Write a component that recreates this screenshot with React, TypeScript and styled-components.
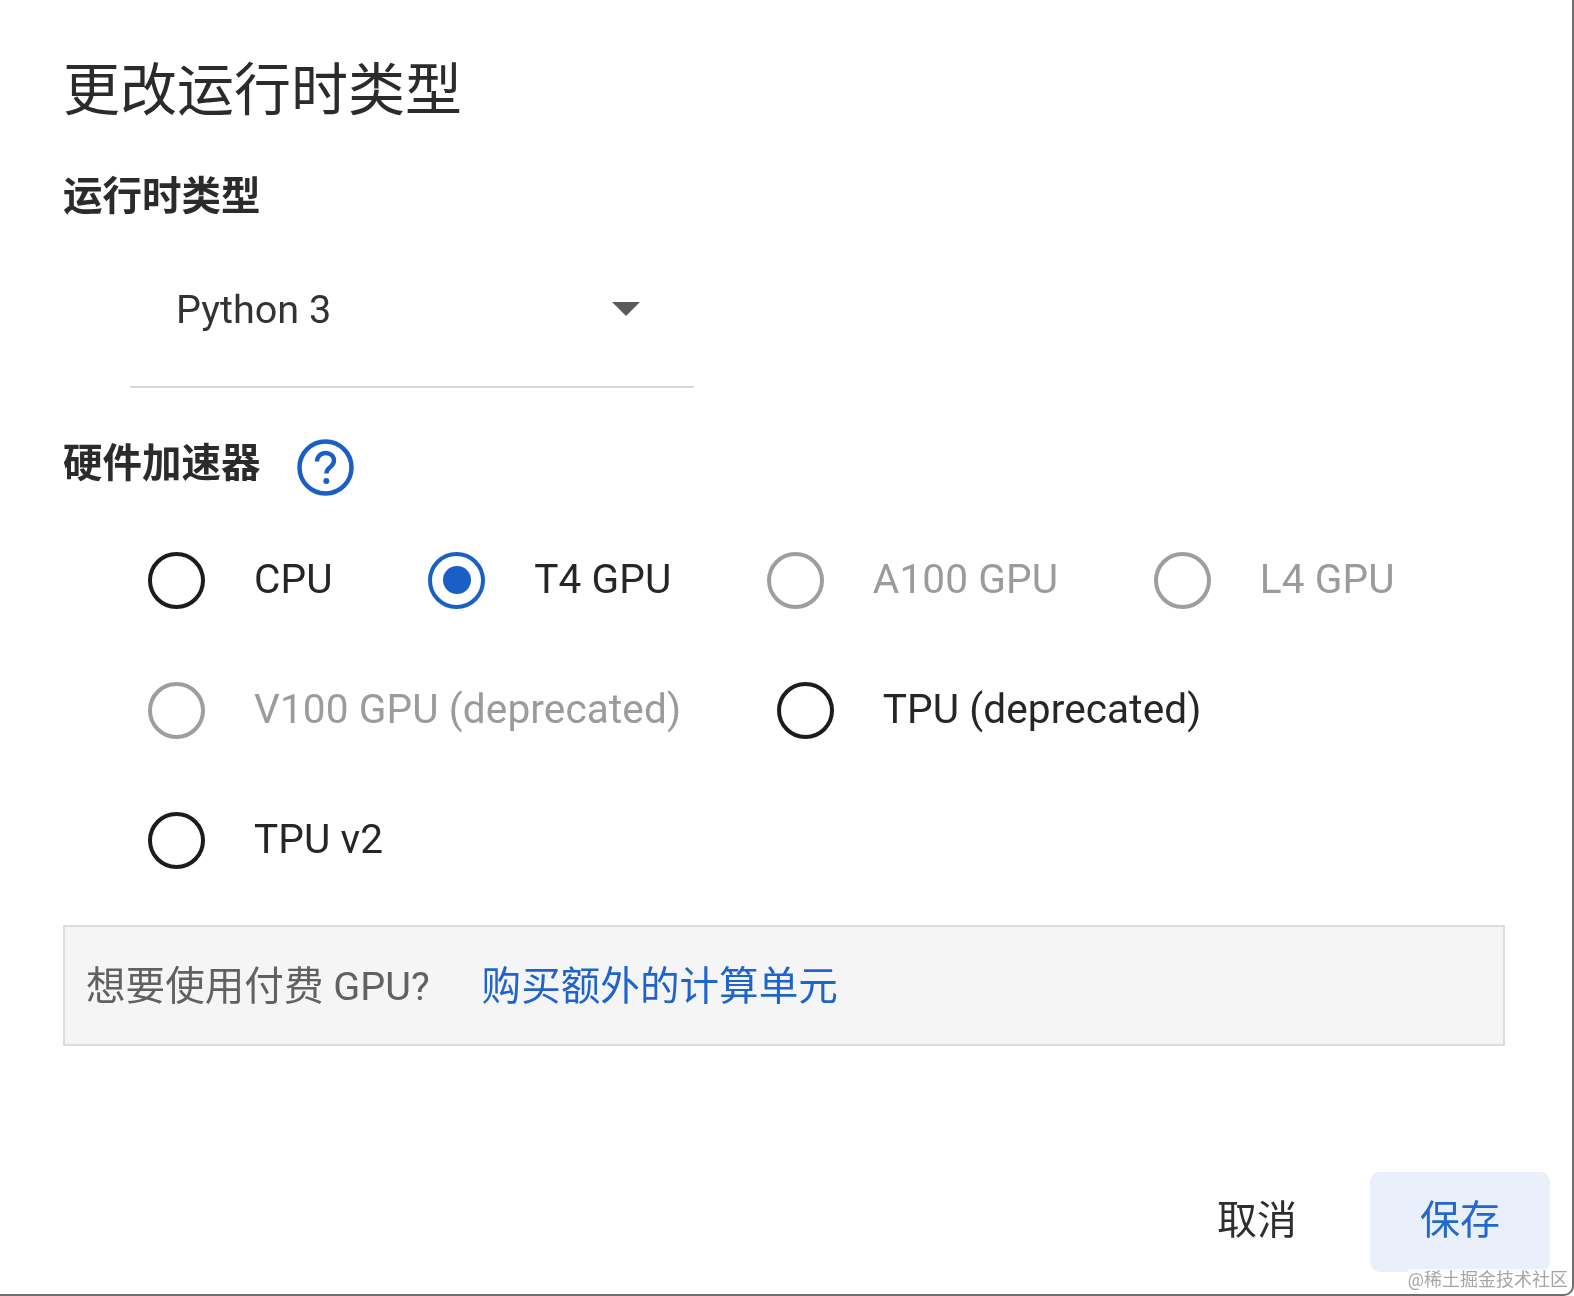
import styled, { createGlobalStyle } from "styled-components";

const GlobalStyle = createGlobalStyle`
  html, body {
    margin: 0;
    padding: 0;
    background: white;
  }

  * {
    box-sizing: border-box;
  }
`;

const Dialog = styled.div`
  position: relative;
  width: 1574px;
  height: 1296px;
  padding: 53px 22px 22px 63px;
  display: flex;
  flex-direction: column;
  overflow: hidden;
  background: #fff;
  border-right: 2px solid #6f6f6f;
  border-bottom: 2px solid #6f6f6f;
  border-bottom-right-radius: 10px;
  font-family: Roboto, "Noto Sans CJK SC", sans-serif;
  color: #212121;
  filter: blur(0.5px);
`;

const Title = styled.h1`
  margin: 0;
  font-size: 57px;
  line-height: 76px;
  font-weight: 400;
  color: #2b2b2b;
`;

const SectionLabel = styled.h2`
  margin: 0;
  font-size: 39.5px;
  line-height: 52px;
  font-weight: 700;
  color: #2b2b2b;
`;

const RuntimeLabel = styled(SectionLabel)`
  margin-top: 42px;
`;

const SelectBox = styled.div`
  margin: 45px 0 0 67px;
  width: 564px;
  height: 120px;
  padding: 0 54px 36px 46px;
  display: flex;
  align-items: center;
  justify-content: space-between;
  border-bottom: 2px solid #d9d9d9;
  font-size: 39.6px;
  color: #333;
`;

const Caret = styled.span`
  width: 0;
  height: 0;
  border-left: 14px solid transparent;
  border-right: 14px solid transparent;
  border-top: 14px solid #5a5a5a;
`;

const AcceleratorHead = styled.div`
  margin-top: 48px;
  display: flex;
  align-items: center;
  gap: 36px;
  height: 56px;
`;

const HelpIcon = styled.svg`
  width: 57px;
  height: 57px;
  margin-top: 6px;
  flex: none;
`;

const RadioGroup = styled.div`
  margin-top: 60px;
  width: 1442px;
  padding-left: 85px;
  display: flex;
  flex-wrap: wrap;
  column-gap: 95.5px;
  row-gap: 74px;
`;

const RadioItem = styled.label<{ $disabled?: boolean }>`
  display: flex;
  align-items: center;
  gap: 50px;
  height: 56px;
  font-size: 40.6px;
  letter-spacing: 0.1px;
  color: ${(p) => (p.$disabled ? "#9b9b9b" : "#262626")};
`;

const RadioMark = styled.span<{ $checked?: boolean; $disabled?: boolean }>`
  width: 57px;
  height: 57px;
  flex: none;
  border-radius: 50%;
  display: flex;
  align-items: center;
  justify-content: center;
  border: 4.5px solid
    ${(p) => (p.$checked ? "#1a5fc8" : p.$disabled ? "#9e9e9e" : "#1c1c1c")};

  &::after {
    content: "";
    display: ${(p) => (p.$checked ? "block" : "none")};
    width: 28px;
    height: 28px;
    border-radius: 50%;
    background: #1a5fc8;
  }
`;

const RadioText = styled.span`
  position: relative;
  top: -1px;
  margin-left: -1px;
`;

const Notice = styled.div`
  margin-top: 57px;
  width: 1442px;
  height: 121px;
  padding: 0 21px 6px;
  display: flex;
  align-items: center;
  gap: 52px;
  background: #f5f5f5;
  border: 2px solid #dcdcdc;
  font-size: 39.6px;
`;

const NoticeText = styled.span`
  color: #616161;
`;

const NoticeLink = styled.a`
  color: #1f64cc;
  text-decoration: none;
`;

const Actions = styled.div`
  margin-top: auto;
  display: flex;
  align-items: center;
  justify-content: flex-end;
  gap: 73px;
`;

const CancelButton = styled.button`
  padding: 0 0 10px;
  border: none;
  background: none;
  font: inherit;
  font-size: 40px;
  color: #2e2e2e;
`;

const SaveButton = styled.button`
  width: 180px;
  height: 100px;
  padding: 0 0 10px;
  border: none;
  border-radius: 10px;
  background: #e9effb;
  font: inherit;
  font-size: 40px;
  color: #2468cc;
`;

const Watermark = styled.span`
  position: absolute;
  right: 4px;
  bottom: 3px;
  font-size: 18px;
  line-height: 22px;
  color: #a6a6a6;
  background: rgba(255, 255, 255, 0.7);
`;

const rows = [
  { label: "CPU" },
  { label: "T4 GPU", checked: true },
  { label: "A100 GPU", disabled: true },
  { label: "L4 GPU", disabled: true },
  { label: "V100 GPU (deprecated)", disabled: true },
  { label: "TPU (deprecated)" },
  { label: "TPU v2" },
];

const App = () => {
  return (
    <>
      <GlobalStyle />
      <Dialog>
        <Title>更改运行时类型</Title>
        <RuntimeLabel>运行时类型</RuntimeLabel>
        <SelectBox>
          <span>Python 3</span>
          <Caret />
        </SelectBox>
        <AcceleratorHead>
          <SectionLabel>硬件加速器</SectionLabel>
          <HelpIcon viewBox="0 0 57 57" fill="none">
            <circle cx="28.5" cy="28.5" r="26" stroke="#1a5fc8" strokeWidth="4.5" />
            <path
              d="M20 22.5c0-5 3.8-8.5 8.7-8.5 4.8 0 8.3 3.2 8.3 7.5 0 3-1.5 4.8-4 6.7-2.6 2-3.6 3.3-3.6 6.3"
              stroke="#1a5fc8"
              strokeWidth="4.4"
            />
            <circle cx="29.3" cy="42" r="3" fill="#1a5fc8" />
          </HelpIcon>
        </AcceleratorHead>
        <RadioGroup>
          {rows.map((r) => (
            <RadioItem key={r.label} $disabled={r.disabled}>
              <RadioMark $checked={r.checked} $disabled={r.disabled} />
              <RadioText>{r.label}</RadioText>
            </RadioItem>
          ))}
        </RadioGroup>
        <Notice>
          <NoticeText>想要使用付费 GPU?</NoticeText>
          <NoticeLink href="#">购买额外的计算单元</NoticeLink>
        </Notice>
        <Actions>
          <CancelButton>取消</CancelButton>
          <SaveButton>保存</SaveButton>
        </Actions>
        <Watermark>@稀土掘金技术社区</Watermark>
      </Dialog>
    </>
  );
};

export default App;
